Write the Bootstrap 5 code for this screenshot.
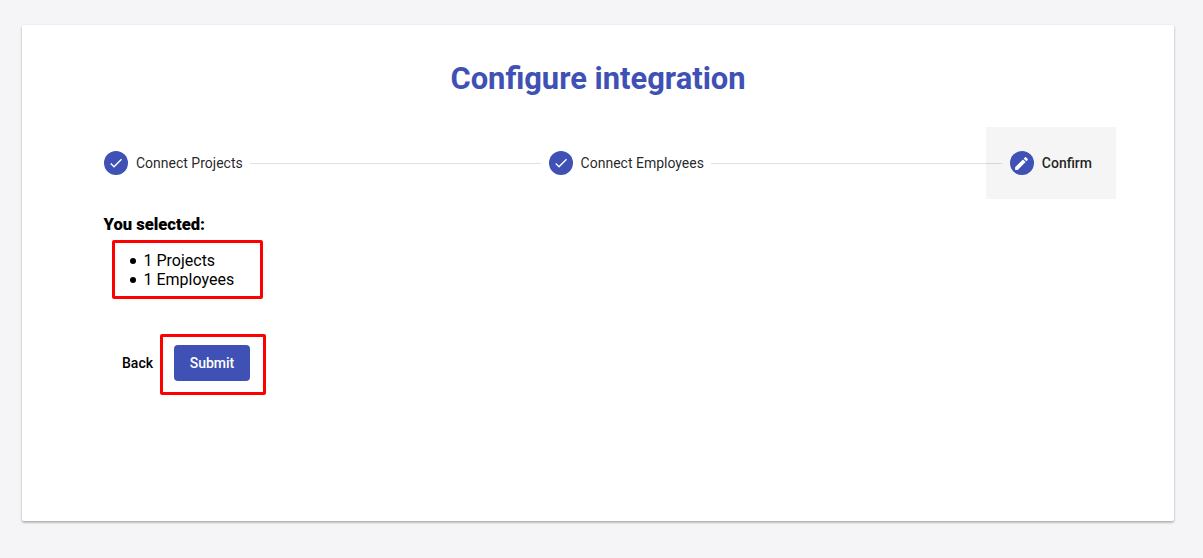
<!DOCTYPE html>
<html lang="en"><head><meta charset="utf-8">
<link href="https://cdn.jsdelivr.net/npm/bootstrap@5.3.0/dist/css/bootstrap.min.css" rel="stylesheet">
<style>
html,body{height:558px;overflow:hidden}
body{background:#f5f5f7;font-family:Roboto,sans-serif;color:#000;padding:25px 29px 37px 22px}
.panel{height:496px;background:#fff;border-radius:2px;box-shadow:0 2px 2px rgba(0,0,0,.14),0 1px 3px rgba(0,0,0,.2);padding:0 58px 0 82px}
.ttl{font-size:30.9px;font-weight:700;color:#3f51b5;line-height:36px;text-align:center;margin:0;padding-top:36px;height:102px;padding-right:24px}
.stepper{height:72px}
.stp{display:flex;align-items:center;gap:8px;font-size:14px;color:rgba(0,0,0,.87);height:72px}
.stp-last{padding:0 24px;background:#f5f5f5;font-weight:500;margin-left:-24px}
.dot{width:24px;height:24px;border-radius:50%;background:#3f51b5;display:flex;align-items:center;justify-content:center;flex:none}
.ln{flex:1;height:1px;background:rgba(0,0,0,.12);margin:0 8px 0 7px;position:relative;z-index:1}
.sel{font-size:16.6px;font-weight:900;line-height:19px;margin:16px 0 0;height:22px;margin-left:-.5px}
.box{border:3px solid red;border-radius:2px}
.box1{width:151px;height:59px;margin:3px 0 0 8px;font-size:16px;line-height:19px;padding-top:8px}
.box1 ul{margin:0;padding:0 0 0 15px;list-style:none}
.box1 li{display:flex;align-items:center;gap:7.5px}
.box1 li::before{content:"";width:6px;height:6px;border-radius:50%;background:#000;flex:none}
.acts{margin-top:35px;margin-left:18px;align-items:center}
.bk{font-size:14px;font-weight:500;margin-right:6px;width:32px;margin-bottom:3px}
.box2{width:106px;height:61px;display:flex;align-items:flex-start;padding:8px 0 0 11px}
.sub{background:#3f51b5;color:#fff;border:0;border-radius:4px;font-size:14px;font-weight:500;width:76px;height:36px;padding:0}
.sub:hover{background:#3f51b5;color:#fff}
</style></head><body>
<main class="panel">
<h1 class="ttl">Configure integration</h1>
<div class="stepper d-flex align-items-center">
<div class="stp"><span class="dot"><svg width="16" height="16" viewBox="0 0 24 24" fill="#fff"><path d="M9 16.2 4.8 12l-1.4 1.4L9 19 21 7l-1.4-1.4z"/></svg></span><span>Connect Projects</span></div>
<div class="ln"></div>
<div class="stp"><span class="dot"><svg width="16" height="16" viewBox="0 0 24 24" fill="#fff"><path d="M9 16.2 4.8 12l-1.4 1.4L9 19 21 7l-1.4-1.4z"/></svg></span><span>Connect Employees</span></div>
<div class="ln"></div>
<div class="stp stp-last"><span class="dot"><svg width="17" height="17" viewBox="0 0 24 24" fill="#fff"><path d="M3 17.25V21h3.75L17.81 9.94l-3.75-3.75zM20.71 7.04a1 1 0 0 0 0-1.41l-2.34-2.34a1 1 0 0 0-1.41 0l-1.83 1.83 3.75 3.75z"/></svg></span><span>Confirm</span></div>
</div>
<p class="sel">You selected:</p>
<div class="box box1"><ul><li>1 Projects</li><li>1 Employees</li></ul></div>
<div class="acts d-flex"><span class="bk">Back</span><div class="box box2"><button class="btn sub" type="button">Submit</button></div></div>
</main>
<script src="https://cdn.jsdelivr.net/npm/bootstrap@5.3.0/dist/js/bootstrap.bundle.min.js"></script>
</body></html>
